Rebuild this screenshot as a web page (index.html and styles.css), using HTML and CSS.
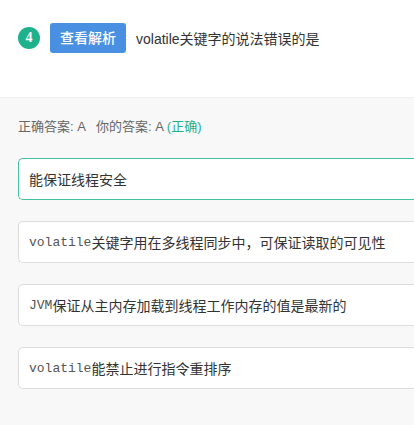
FILE: index.html
```html
<!DOCTYPE html>
<html lang="zh">
<head>
<meta charset="utf-8">
<link rel="stylesheet" href="styles.css">
</head>
<body>
<div class="header">
  <div class="qrow">
    <span class="badge">4</span>
    <span class="btn">查看解析</span>
    <span class="question">volatile关键字的说法错误的是</span>
  </div>
</div>
<div class="content">
  <div class="answer">正确答案: A &nbsp; 你的答案: A <span class="ok">(正确)</span></div>
  <div class="options">
    <div class="option selected">能保证线程安全</div>
    <div class="option"><code>volatile</code>关键字用在多线程同步中，可保证读取的可见性</div>
    <div class="option"><code>JVM</code>保证从主内存加载到线程工作内存的值是最新的</div>
    <div class="option"><code>volatile</code>能禁止进行指令重排序</div>
  </div>
</div>
</body>
</html>
```
FILE: styles.css
```css
html, body {
  margin: 0;
  padding: 0;
}
body {
  background: #f8f8f8;
  font-family: "Liberation Sans", "Noto Sans CJK SC", sans-serif;
  color: #333;
  overflow: hidden;
  width: 414px;
  height: 425px;
}
.header {
  background: #fff;
  height: 98px;
  box-sizing: border-box;
  border-bottom: 1px solid #eeeeee;
  padding: 23px 0 0 18px;
}
.qrow {
  display: flex;
  align-items: center;
  height: 30px;
}
.badge {
  width: 22px;
  height: 22px;
  border-radius: 50%;
  background: #1fb08c;
  color: #fff;
  font-family: "Liberation Serif", serif;
  font-weight: bold;
  font-size: 14px;
  display: flex;
  align-items: center;
  justify-content: center;
  margin-right: 10px;
}
.btn {
  height: 30px;
  line-height: 30px;
  padding: 0 10px;
  background: #4a90e2;
  color: #fff;
  border-radius: 3px;
  font-size: 14px;
  font-weight: 500;
}
.question {
  margin-left: 10px;
  font-size: 14px;
  color: #333;
}
.content {
  padding: 19px 0 0 18px;
}
.answer {
  font-size: 13px;
  color: #666;
  line-height: 20px;
}
.ok {
  color: #1fb08c;
}
.options {
  margin-top: 21px;
  display: flex;
  flex-direction: column;
  gap: 21px;
  width: 396px;
}
.option {
  height: 42px;
  box-sizing: border-box;
  border: 1px solid #dddddd;
  border-right: none;
  border-radius: 5px 0 0 5px;
  background: #fff;
  padding: 0 10px;
  display: flex;
  align-items: center;
  font-size: 14px;
  color: #333;
}
.option.selected {
  border-color: #45c1a1;
}
code {
  font-family: "Liberation Mono", monospace;
  font-size: 13px;
  color: #555;
}
```
